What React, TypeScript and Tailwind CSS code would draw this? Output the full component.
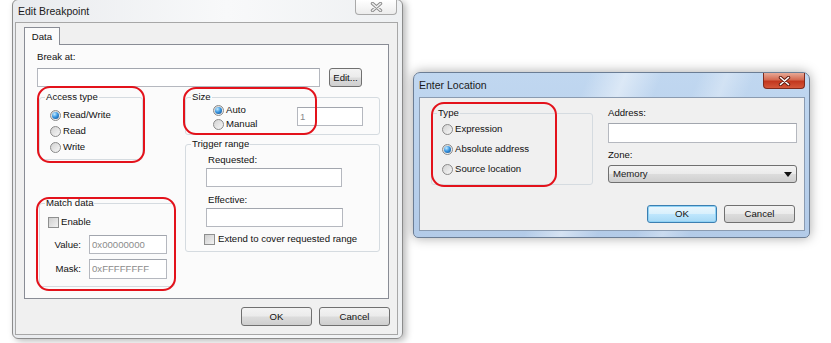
import type { ReactNode } from 'react'

function Radio({ checked }: { checked?: boolean }) {
  return (
    <span className="flex h-[11px] w-[11px] shrink-0 items-center justify-center rounded-full border border-[#8a8a8a] bg-[linear-gradient(135deg,#d2d2d2,#f7f7f7)]">
      {checked && (
        <span className="h-[7px] w-[7px] rounded-full bg-[radial-gradient(circle_at_35%_30%,#c6ecff_0%,#3a97e2_45%,#0b4585_100%)]" />
      )}
    </span>
  )
}

function Check() {
  return (
    <span className="h-[11px] w-[11px] shrink-0 border border-[#8e8f8f] bg-[linear-gradient(135deg,#cfcfcf,#f2f2f2)]" />
  )
}

function RadioRow({ label, checked, h = 'h-[16px]' }: { label: string; checked?: boolean; h?: string }) {
  return (
    <div className={`flex items-center gap-[2px] ${h}`}>
      <Radio checked={checked} />
      <span>{label}</span>
    </div>
  )
}

function Field({ className, children }: { className: string; children?: ReactNode }) {
  return (
    <div className={`flex items-center border border-[#b5b8bf] border-t-[#a2a6ae] bg-white pl-[2px] text-[#8b8b8b] ${className}`}>
      {children}
    </div>
  )
}

function Btn({ className, children }: { className: string; children: ReactNode }) {
  return (
    <div
      className={`flex items-center justify-center rounded-[3px] border border-[#707070] bg-[linear-gradient(180deg,#f3f3f3_0%,#ebebeb_48%,#dcdcdc_52%,#cfcfcf_100%)] ${className}`}
    >
      {children}
    </div>
  )
}

function Group({ label, className, children }: { label: string; className: string; children: ReactNode }) {
  return (
    <fieldset className={`rounded-[3px] border border-[#d5dbe0] p-0 ${className}`}>
      <legend className="ml-[5px] px-[1px] leading-[12px]">{label}</legend>
      {children}
    </fieldset>
  )
}

function CloseX({ outer, inner }: { outer: string; inner: string }) {
  return (
    <svg width="13" height="10" viewBox="0 0 13 10">
      <path d="M2.5 1.5 L10.5 8.5 M10.5 1.5 L2.5 8.5" stroke={outer} strokeWidth="3.4" strokeLinecap="round" />
      <path d="M2.5 1.5 L10.5 8.5 M10.5 1.5 L2.5 8.5" stroke={inner} strokeWidth="1.6" strokeLinecap="round" />
    </svg>
  )
}

function Mark({ className }: { className: string }) {
  return <div className={`pointer-events-none absolute rounded-[13px] border-2 border-[#e3121b] ${className}`} />
}

function EditBreakpoint() {
  return (
    <div className="absolute left-[12px] top-[-1px] flex h-[340px] w-[391px] flex-col rounded-[6px] border border-[#8c8c8c] bg-[linear-gradient(90deg,#e9ebee,#f8f9fa_55%,#eef0f2)] shadow-[3px_2px_7px_rgba(0,0,0,0.28)]">
      <div className="relative flex h-[22px] items-center pl-[5px] text-[10.5px] text-[#1a1a1a]">
        Edit Breakpoint
        <div className="absolute right-[5px] top-0 flex h-[15px] w-[42px] items-center justify-center rounded-b-[4px] border border-t-0 border-[#a9a9a9] bg-[linear-gradient(180deg,#ffffff,#ececec)]">
          <CloseX outer="#8a8a8a" inner="#eeeeee" />
        </div>
      </div>

      <div className="ml-[2px] flex h-[313px] w-[383px] flex-col border border-[#a7a7a7] bg-[#f0f0f0]">
        <div className="relative z-10 -mb-[1px] ml-[8px] mt-[4px] flex h-[18px] w-[36px] items-center justify-center border border-b-0 border-[#898c95] bg-[#fbfbfb]">
          Data
        </div>
        <div className="ml-[8px] flex h-[255px] w-[365px] flex-col border border-[#898c95] bg-[#fbfbfb] pl-[12px]">
          <div className="mt-[6px] leading-[12px]">Break at:</div>
          <div className="mt-[5px] flex gap-[9px]">
            <Field className="h-[19px] w-[283px]" />
            <Btn className="h-[19px] w-[33px]">Edit...</Btn>
          </div>
          <div className="mt-[4px] grid grid-cols-[148px_195px]">
            <div className="flex flex-col">
              <Group label="Access type" className="ml-[2px] h-[69px] w-[104px]">
                <div className="flex flex-col pl-[10px] pt-[4px]">
                  <RadioRow label="Read/Write" checked />
                  <RadioRow label="Read" />
                  <RadioRow label="Write" />
                </div>
              </Group>
              <Group label="Match data" className="ml-[2px] mt-[37px] h-[90px] w-[136px]">
                <div className="flex flex-col pl-[8px] pt-[5px]">
                  <div className="flex h-[16px] items-center gap-[2px]">
                    <Check />
                    <span>Enable</span>
                  </div>
                  <div className="mt-[5px] flex items-center gap-[8px]">
                    <span className="w-[33px] text-right">Value:</span>
                    <Field className="h-[19px] w-[78px]">0x00000000</Field>
                  </div>
                  <div className="mt-[5px] flex items-center gap-[8px]">
                    <span className="w-[33px] text-right">Mask:</span>
                    <Field className="h-[20px] w-[78px]">0xFFFFFFFF</Field>
                  </div>
                </div>
              </Group>
            </div>
            <div className="flex flex-col">
              <Group label="Size" className="h-[44px] w-[195px]">
                <div className="flex">
                  <div className="flex w-[111px] flex-col pl-[27px]">
                    <RadioRow label="Auto" checked h="h-[14px]" />
                    <RadioRow label="Manual" h="h-[14px]" />
                  </div>
                  <Field className="mt-[4px] h-[19px] w-[66px]">1</Field>
                </div>
              </Group>
              <Group label="Trigger range" className="mt-[3px] h-[114px] w-[195px]">
                <div className="flex flex-col pl-[20px]">
                  <div className="mt-[4px] pl-[2px] leading-[12px]">Requested:</div>
                  <Field className="mt-[2px] h-[19px] w-[136px]" />
                  <div className="mt-[7px] pl-[2px] leading-[12px]">Effective:</div>
                  <Field className="mt-[2px] h-[19px] w-[137px]" />
                  <div className="-ml-[2px] mt-[6px] flex h-[12px] items-center gap-[3px]">
                    <Check />
                    <span>Extend to cover requested range</span>
                  </div>
                </div>
              </Group>
            </div>
          </div>
        </div>
        <div className="mt-[8px] flex justify-end gap-[7px] pr-[7px]">
          <Btn className="h-[19px] w-[71px]">OK</Btn>
          <Btn className="h-[19px] w-[71px]">Cancel</Btn>
        </div>
      </div>
    </div>
  )
}

function EnterLocation() {
  return (
    <div className="absolute left-[413px] top-[72px] flex h-[166px] w-[397px] flex-col rounded-b-[5px] rounded-t-[7px] border border-[#6b7d94] bg-[linear-gradient(112deg,rgba(255,255,255,0)_38%,rgba(255,255,255,0.45)_46%,rgba(255,255,255,0)_54%,rgba(255,255,255,0)_62%,rgba(255,255,255,0.3)_68%,rgba(255,255,255,0)_74%),linear-gradient(180deg,#c0d7f0,#b3cbe8)] shadow-[0_0_12px_rgba(0,0,0,0.35)]">
      <div className="relative flex h-[24px] items-center pl-[5px] text-[10.5px] text-[#1a1a1a]">
        Enter Location
        <div className="absolute right-[4px] top-0 flex h-[16px] w-[42px] items-center justify-center rounded-b-[4px] border border-t-0 border-[#7e2a1d] bg-[linear-gradient(180deg,#e8a996_0%,#d46a51_45%,#c2371e_55%,#d4573a_100%)]">
          <CloseX outer="#5e1a10" inner="#ffffff" />
        </div>
      </div>
      <div className="ml-[5px] flex h-[134px] w-[386px] flex-col border border-[#8a9bb1] bg-[#f0f0f0]">
        <div className="flex">
          <Group label="Type" className="ml-[11px] mt-[9px] h-[78px] w-[162px]">
            <div className="flex flex-col pl-[10px]">
              <RadioRow label="Expression" h="h-[20px]" />
              <RadioRow label="Absolute address" checked h="h-[20px]" />
              <RadioRow label="Source location" h="h-[20px]" />
            </div>
          </Group>
          <div className="ml-[15px] flex w-[189px] flex-col">
            <div className="mt-[9px] leading-[12px]">Address:</div>
            <Field className="mt-[4px] h-[20px] w-[189px]" />
            <div className="mt-[6px] leading-[12px]">Zone:</div>
            <Btn className="mt-[4px] h-[18px] w-[189px] !justify-between px-[4px] text-[#1a1a1a]">
              <span>Memory</span>
              <svg width="8" height="5" viewBox="0 0 8 5">
                <path d="M0 0 H8 L4 5 Z" fill="#111" />
              </svg>
            </Btn>
          </div>
        </div>
        <div className="mt-[20px] flex justify-end gap-[7px] pr-[9px]">
          <div className="flex h-[18px] w-[70px] items-center justify-center rounded-[3px] border border-[#3c7fb1] bg-[linear-gradient(180deg,#eaf6fd_0%,#d9f0fc_48%,#bee6fd_52%,#a7d9f5_100%)] shadow-[inset_0_0_0_1px_#8fd2f5]">
            OK
          </div>
          <Btn className="h-[18px] w-[71px]">Cancel</Btn>
        </div>
      </div>
    </div>
  )
}

export default function App() {
  return (
    <div className="relative h-[343px] w-[831px] overflow-hidden bg-white font-['Liberation_Sans',Arial,sans-serif] text-[9.6px] leading-[12px] text-[#111111]">
      <EditBreakpoint />
      <EnterLocation />
      <Mark className="left-[37px] top-[86px] h-[77px] w-[108px]" />
      <Mark className="left-[183px] top-[87px] h-[48px] w-[134px]" />
      <Mark className="left-[36px] top-[197px] h-[94px] w-[140px]" />
      <Mark className="left-[431px] top-[102px] h-[85px] w-[126px]" />
    </div>
  )
}
